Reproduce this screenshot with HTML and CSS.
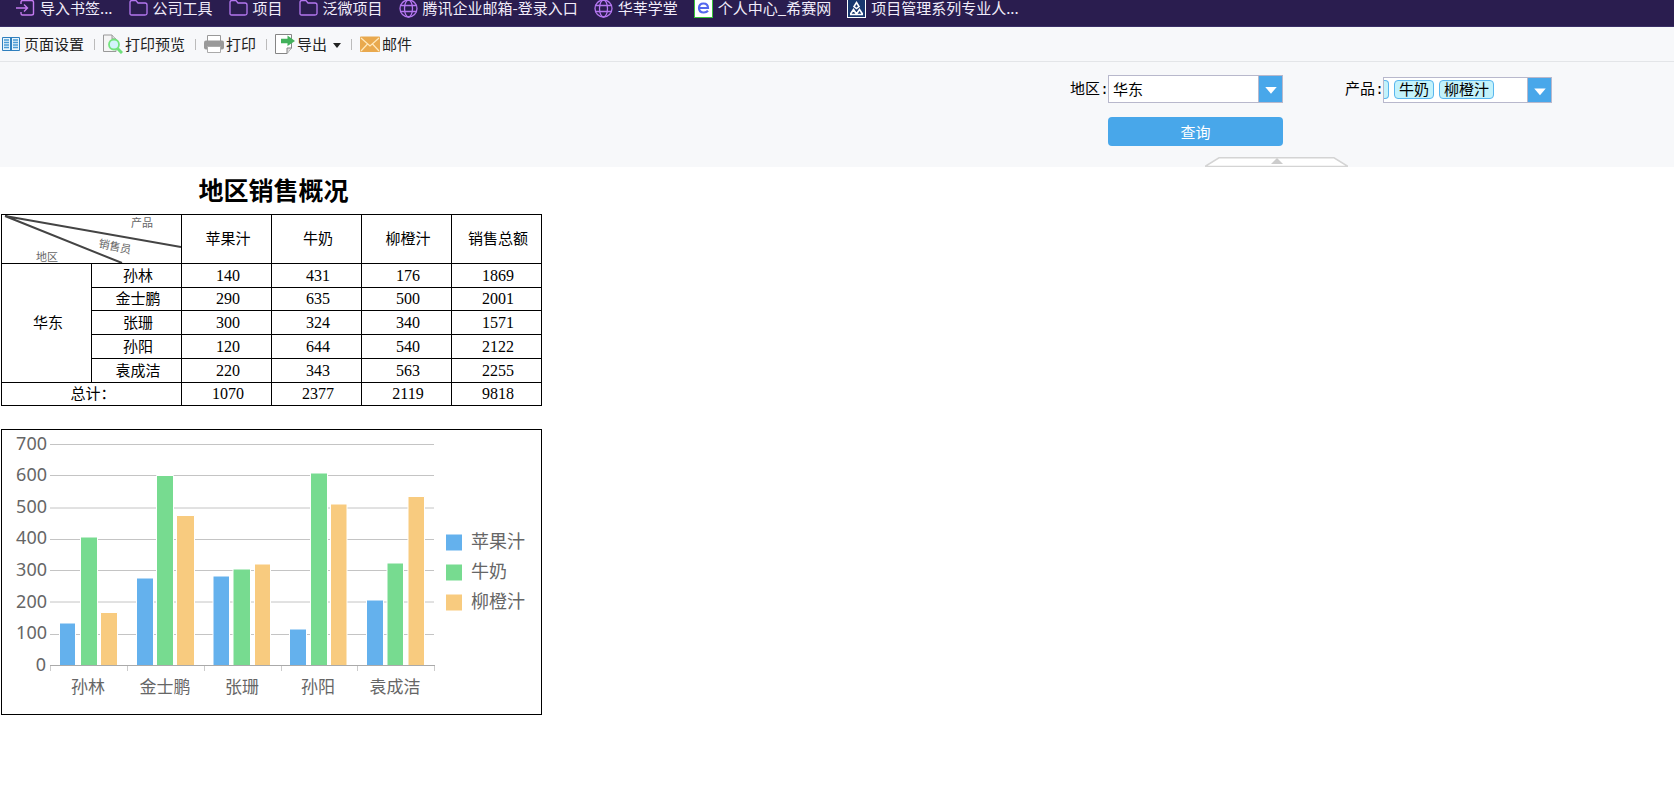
FILE: index.html
```html
<!DOCTYPE html>
<html lang="zh-CN">
<head>
<meta charset="utf-8">
<title>地区销售概况</title>
<link rel="stylesheet" href="styles.css">
</head>
<body>
<svg class="defs" aria-hidden="true">
  <symbol id="folder" viewBox="0 0 19 19"><path d="M1 15V3.500Q1 1.500 3 1.500H7L9 4H16Q18 4 18 6V14.500Q18 16 16 16H2.500Q1 16 1 14.500Z" fill="none" stroke="#b477f0" stroke-width="1.300"/></symbol>
  <symbol id="globe" viewBox="0 0 19 19"><g fill="none" stroke="#b477f0" stroke-width="1.300"><circle cx="9.500" cy="9.500" r="8.500"/><ellipse cx="9.500" cy="9.500" rx="4" ry="8.500"/><path d="M1.500 6.500H17.500M1.500 12.500H17.500"/></g></symbol>
</svg>
<nav class="bookmarks">
  <a class="bookmark" href="#"><svg class="icon" viewBox="0 0 19 19"><path d="M5 5V3Q5 1.500 6.500 1.500H15.500Q17.500 1.500 17.500 3V14.500Q17.500 16 15.500 16H6.500Q5 16 5 14.500V13M0 9H11M8 5.500L11.500 9L8 12.500" fill="none" stroke="#c47af0" stroke-width="1.400"/></svg>导入书签...</a>
  <a class="bookmark" href="#"><svg class="icon"><use href="#folder"/></svg>公司工具</a>
  <a class="bookmark" href="#"><svg class="icon"><use href="#folder"/></svg>项目</a>
  <a class="bookmark" href="#"><svg class="icon"><use href="#folder"/></svg>泛微项目</a>
  <a class="bookmark" href="#"><svg class="icon"><use href="#globe"/></svg>腾讯企业邮箱-登录入口</a>
  <a class="bookmark" href="#"><svg class="icon"><use href="#globe"/></svg>华莘学堂</a>
  <a class="bookmark" href="#"><svg class="icon" viewBox="0 0 19 19"><rect x=".5" y="-1" width="18" height="19.500" fill="#fff" stroke="#37c43a"/><path d="M5 9H14Q14 4.500 9.500 4.500Q5 4.500 5 9Q5 13.500 9.800 13.500Q12.500 13.500 14 11.800" fill="none" stroke="#5567ee" stroke-width="2.200"/></svg>个人中心_希赛网</a>
  <a class="bookmark" href="#"><svg class="icon" viewBox="0 0 19 19"><rect x=".5" y=".5" width="18" height="18" fill="#18386f" stroke="#fff"/><path d="M9.500 3.500L12 7.500L9.500 9.500L7 7.500Z" fill="none" stroke="#fff" stroke-width="1.600"/><path d="M3.500 15L6.500 10.500L9.500 15L12.500 10.500L15.500 15M3 15.500H16" fill="none" stroke="#fff" stroke-width="1.600"/></svg>项目管理系列专业人...</a>
</nav>
<div class="toolbar">
  <button class="tool" type="button"><svg class="tool-icon" viewBox="0 0 20 20"><path d="M.5 3.500H17.500V16.500H.5Z" fill="#e8f5fc" stroke="#2f7fbe"/><path d="M8 4H10V16H8Z" fill="#2f7fbe"/><path d="M2 6H7M2 8.500H7M2 11H7M2 13.500H7M11 6H16M11 8.500H16M11 11H16M11 13.500H16" stroke="#4a9ad4" stroke-width="1.500"/></svg>页面设置</button>
  <span class="divider"></span>
  <button class="tool" type="button"><svg class="tool-icon" viewBox="0 0 20 20"><path d="M.5 1H9L13 5V17.500H.5Z" fill="#f5f5f5" stroke="#999"/><path d="M9 1V5H13" fill="#ddd" stroke="#999"/><path d="M14.500 14.500L19 19" stroke="#6fe07b" stroke-width="3"/><circle cx="11" cy="10.500" r="5" fill="#d3f3fb" stroke="#73e47d" stroke-width="1.800"/></svg>打印预览</button>
  <span class="divider"></span>
  <button class="tool" type="button"><svg class="tool-icon" viewBox="0 0 20 20"><path d="M3.500 1.500H16.500V8H3.500Z" fill="#fff" stroke="#999"/><rect y="6.500" width="20" height="9" rx="2" fill="#999"/><path d="M3.500 12.500H16.500V18.500H3.500Z" fill="#fff" stroke="#aaa"/></svg>打印</button>
  <span class="divider"></span>
  <button class="tool" type="button"><svg class="tool-icon" viewBox="0 0 20 20"><path d="M.5 .5H16.500V14L12 19.500H.5Z" fill="#fff" stroke="#858585"/><path d="M16.500 14H12V19.500" fill="#ddd" stroke="#858585"/><path d="M6 4.800H12.500V1.500L20 7L12.500 12V9.200H6Z" fill="#42b15b"/></svg>导出<svg class="caret" viewBox="0 0 8 5"><path d="M0 0H8L4 5Z" fill="#222"/></svg></button>
  <span class="divider"></span>
  <button class="tool" type="button"><svg class="tool-icon" viewBox="0 0 20 20"><rect y="2.500" width="20" height="15.500" rx="1" fill="#e9a94e"/><path d="M1 4L10 12L19 4M1 17L7.500 10M19 17L12.500 10" fill="none" stroke="#ffe9bd" stroke-width="1.200"/></svg>邮件</button>
</div>
<form class="params">
  <div class="field region">
    <label for="region">地区:</label>
    <div class="picker"><select id="region"><option>华东</option></select><svg class="arrow" viewBox="0 0 24 26"><path d="M6.500 11H18.500L12.500 18Z" fill="#fff"/></svg></div>
  </div>
  <div class="field product">
    <label for="product">产品:</label>
    <div class="combo"><div class="tags"><span class="tag clipped"></span><span class="tag">牛奶</span><span class="tag">柳橙汁</span></div><button class="combo-arrow" id="product" type="button" aria-label="产品"><svg class="arrow" viewBox="0 0 24 24"><path d="M6.500 10H18.500L12.500 17Z" fill="#fff"/></svg></button></div>
  </div>
  <button class="query" type="button">查询</button>
  <button class="collapse" type="button" aria-label="收起"><svg class="collapse-shape" viewBox="0 0 143 10"><path d="M0 9.500L14 .8H129L143 9.500Z" fill="#fff" stroke="#d4d4d4" stroke-width="1.500"/><path d="M66 7L72 1L78 7Z" fill="#ccc"/></svg></button>
</form>
<main class="report">
  <h1 class="title">地区销售概况</h1>
  <table class="sales">
    <thead>
      <tr class="head"><th colspan="2" class="corner"><svg class="corner-art" viewBox="0 0 179 48"><g class="corner-lines"><path d="M3 1L179 32M3 1L120 48"/></g><g class="corner-text"><text x="129" y="12">产品</text><text x="96" y="32" transform="rotate(12 96 32)">销售员</text><text x="34" y="46">地区</text></g></svg></th><th>苹果汁</th><th>牛奶</th><th>柳橙汁</th><th>销售总额</th></tr>
    </thead>
    <tbody>
      <tr><th rowspan="5">华东</th><th>孙林</th><td>140</td><td>431</td><td>176</td><td>1869</td></tr>
      <tr class="compact"><th>金士鹏</th><td>290</td><td>635</td><td>500</td><td>2001</td></tr>
      <tr><th>张珊</th><td>300</td><td>324</td><td>340</td><td>1571</td></tr>
      <tr><th>孙阳</th><td>120</td><td>644</td><td>540</td><td>2122</td></tr>
      <tr><th>袁成洁</th><td>220</td><td>343</td><td>563</td><td>2255</td></tr>
      <tr class="compact"><th colspan="2">总计：</th><td>1070</td><td>2377</td><td>2119</td><td>9818</td></tr>
    </tbody>
  </table>
  <div class="chart">
    <svg class="plot" viewBox="2 430 539 284">
      <path class="grid" d="M50 444.500H434M50 475.500H434M50 508H434M50 539.500H434M50 570.500H434M50 602H434M50 634.500H434"/>
      <g class="bars">
        <path class="apple" d="M59.500 666V623H75.500V666ZM136.500 666V578H153.500V666ZM213 666V576H229.500V666ZM289.500 666V629H306.500V666ZM366.500 666V600H383.500V666Z"/>
        <path class="milk" d="M80.500 666V537H97.500V666ZM156.500 666V475.500H173.500V666ZM233 666V569H250.500V666ZM310.500 666V473H327.500V666ZM387 666V563H403.500V666Z"/>
        <path class="orange" d="M100.500 666V612.500H117.500V666ZM176.500 666V515.500H194.500V666ZM254.500 666V564H270.500V666ZM330.500 666V504H347V666ZM408 666V496.500H424.500V666Z"/>
      </g>
      <path class="axis" d="M50 665.500H435"/><path class="ticks" d="M50.500 666V671M127.500 666V671M204.500 666V671M281.500 666V671M357.500 666V671M434.500 666V671"/>
      <g class="y-labels"><text x="47" y="450">700</text><text x="47" y="481">600</text><text x="47" y="513">500</text><text x="47" y="544">400</text><text x="47" y="576">300</text><text x="47" y="608">200</text><text x="47" y="639">100</text><text x="46" y="671">0</text></g>
      <g class="x-labels"><text x="88" y="693">孙林</text><text x="165" y="693">金士鹏</text><text x="242" y="693">张珊</text><text x="318" y="693">孙阳</text><text x="395" y="693">袁成洁</text></g>
      <path class="apple" d="M446 534.500H462V550.500H446Z"/><path class="milk" d="M446 564.500H462V580.500H446Z"/><path class="orange" d="M446 594.500H462V610.500H446Z"/>
      <g class="legend"><text x="471" y="548">苹果汁</text><text x="471" y="578">牛奶</text><text x="471" y="608">柳橙汁</text></g>
    </svg>
  </div>
</main>
</body>
</html>
```
FILE: styles.css
```css
* { box-sizing: border-box; }
body { margin: 0; background: #fff; color: #000; font: 15px/20px "Noto Sans CJK SC", sans-serif; }
button { margin: 0; padding: 0; border: 0; background: none; color: inherit; font: inherit; }
svg { display: block; flex: none; }
.defs { position: absolute; width: 0; height: 0; }

.bookmarks { display: flex; align-items: center; gap: 16px; height: 27px; padding: 0 16px 10px; background: #2a1d4f; border-bottom: 1px solid #3a2f66; }
.bookmark { display: flex; align-items: center; gap: 5px; color: #f1ecfa; line-height: 16px; text-decoration: none; white-space: nowrap; }
.icon { width: 19px; height: 19px; }

.toolbar { display: flex; align-items: center; gap: 8px; height: 35px; padding-left: 2px; background: #f7f8fa; border-bottom: 1px solid #e3e5e8; color: #222; }
.tool { display: flex; align-items: center; gap: 2px; white-space: nowrap; }
.tool-icon { width: 20px; height: 20px; }
.caret { width: 8px; height: 5px; margin: 2px 0 0 4px; }
.divider { width: 1px; height: 11px; margin-left: 2px; background: #bbb; }

.params { display: grid; grid-template-columns: 213px 207px; column-gap: 62px; justify-content: end; grid-template-rows: 30px 29px 10px; row-gap: 12px; padding: 13px 122px 0 0; height: 105px; position: relative; background: #f7f8fa; }
.field { display: flex; align-items: flex-start; }
.field label { width: 38px; font-family: "Liberation Mono", "Noto Sans CJK SC", monospace; line-height: 32px; white-space: nowrap; flex: none; }
.picker { position: relative; flex: 1; height: 28px; }
.picker select { width: 100%; height: 28px; padding: 0 4px; appearance: none; border: 1px solid #b8b8cc; border-radius: 0; background: #fff; color: #000; font: inherit; }
.picker .arrow { position: absolute; top: 1px; right: 1px; width: 24px; height: 26px; background: #48a7ea; border-left: 1px solid #b8b8cc; }
.combo { display: flex; flex: 1; height: 26px; margin-top: 2px; border: 1px solid #b8b8cc; background: #fff; }
.tags { display: flex; flex: 1; align-items: flex-start; gap: 5px; padding-top: 2px; }
.tag { height: 19px; padding: 0 4px; border: 1px solid #5ab6ee; border-radius: 4px; background: #c3f2fb; line-height: 16px; }
.clipped { width: 5px; padding: 0; border-left: 0; border-radius: 0 4px 4px 0; }
.combo-arrow { width: 24px; height: 24px; border-left: 1px solid #b8b8cc; background: #48a7ea; }
.query { grid-column: 1; grid-row: 2; margin-left: 38px; border-radius: 4px; background: #48a7ea; color: #fff; line-height: 18px; }
.collapse { position: absolute; right: 326px; bottom: 0; width: 143px; height: 10px; }
.collapse-shape { width: 100%; height: 100%; }

.report { width: 541px; margin-left: 1px; }
.title { margin: 0; padding: 6px 0 0 4px; height: 47px; font-size: 25px; line-height: 32px; font-weight: 700; text-align: center; }
.sales { width: 100%; border-collapse: collapse; table-layout: fixed; }
.sales th, .sales td { height: 24px; padding: 0 0 2px 3px; border: 1px solid #000; text-align: center; font-weight: 400; line-height: 20px; }
.sales td { padding-bottom: 0; font-family: "Liberation Serif", serif; font-size: 16px; }
.sales .head th { height: 49px; }
.sales .head .corner { padding: 0; }
.sales .compact th, .sales .compact td { height: 23px; }
.corner-art { width: 100%; height: 48px; }
.corner-lines { fill: none; stroke: #444; stroke-width: 2px; }
.corner-text { fill: #666; font-size: 11px; }

.chart { margin-top: 23px; border: 1px solid #000; }
.plot { width: 100%; }
.grid { stroke: #c4c4c4; stroke-width: 1px; }
.axis { stroke: #aaa; stroke-width: 1px; }
.ticks { stroke: #ccc; stroke-width: 1px; }
.bars { stroke: #fff; stroke-width: 1px; }
.apple { fill: #64b1ed; }
.milk { fill: #77db90; }
.orange { fill: #f8cb7f; }
.y-labels, .x-labels, .legend { fill: #666; }
.y-labels { font-family: "Noto Sans", sans-serif; font-size: 18px; text-anchor: end; }
.x-labels { font-size: 17px; text-anchor: middle; }
.legend { font-size: 18px; }
```
